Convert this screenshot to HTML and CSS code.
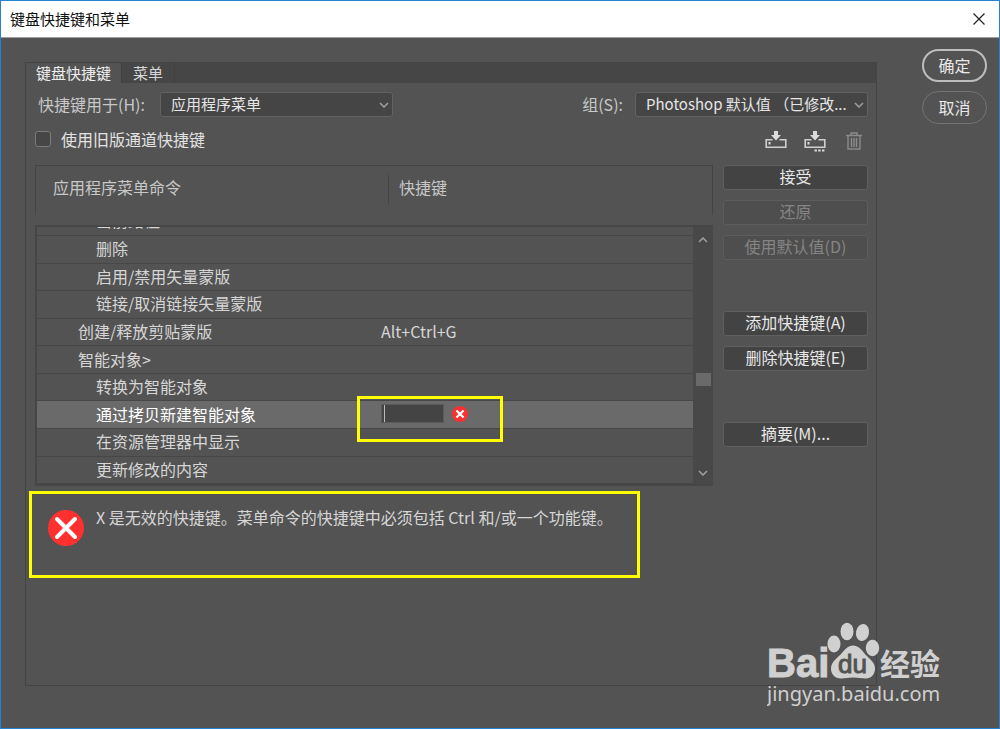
FILE: index.html
```html
<!DOCTYPE html>
<html lang="zh-CN">
<head>
<meta charset="utf-8">
<title>键盘快捷键和菜单</title>
<link rel="stylesheet" href="styles.css">
</head>
<body>
<div class="window">
  <header class="titlebar">
    <h1 class="title">键盘快捷键和菜单</h1>
    <button class="close" aria-label="关闭"><svg width="12" height="12" viewBox="0 0 12 12"><path d="M0.5 0.5l11 11M11.5 0.5l-11 11" stroke="#222" stroke-width="1.2"/></svg></button>
  </header>
  <main class="content">
    <section class="panel">
      <nav class="tabs" role="tablist">
        <button class="tab tab-active" role="tab" aria-selected="true">键盘快捷键</button>
        <button class="tab" role="tab" aria-selected="false">菜单</button>
      </nav>
      <div class="filters">
        <label class="label label-scope" for="scope">快捷键用于(H):</label>
        <div class="select-wrap">
          <select class="select" id="scope"><option>应用程序菜单</option></select>
          <svg class="chevron" width="10" height="6" viewBox="0 0 10 6"><path d="M1 1l4 4 4-4"/></svg>
        </div>
        <label class="label label-set" for="set">组(S):</label>
        <div class="select-wrap">
          <select class="select" id="set"><option>Photoshop 默认值 （已修改...</option></select>
          <svg class="chevron" width="10" height="6" viewBox="0 0 10 6"><path d="M1 1l4 4 4-4"/></svg>
        </div>
      </div>
      <div class="options">
        <label class="check"><input class="checkbox" type="checkbox">使用旧版通道快捷键</label>
        <div class="tools">
          <button class="tool" aria-label="存储"><svg width="22" height="22" viewBox="0 0 22 22"><path d="M9 1h4v4h3l-5 5.500-5-5.500h3z" fill="#dcdcdc"/><path d="M7.500 9.800H1.200v7.400h19.600V9.800H14.500" fill="none" stroke="#cfcfcf" stroke-width="1.600"/><path d="M3.500 12h2v2.500h-2z" fill="#dcdcdc"/></svg></button>
          <button class="tool" aria-label="存储为"><svg width="22" height="22" viewBox="0 0 22 22"><path d="M9 1h4v4h3l-5 5.500-5-5.500h3z" fill="#dcdcdc"/><path d="M7.500 9.800H1.200v7.400h19.600V9.800H14.500" fill="none" stroke="#cfcfcf" stroke-width="1.600"/><path d="M3.500 12h2v2.500h-2zM10.500 19.500h2.400v2h-2.400zM14.200 19.500h2.400v2h-2.400zM18 19.500h2.400v2H18z" fill="#dcdcdc"/></svg></button>
          <button class="tool" aria-label="删除组"><svg width="22" height="22" viewBox="0 0 22 22"><path d="M3 5.500h16M8 5V3h6v2M5 6v13h12V6M8.500 8v9M11 8v9M13.500 8v9" fill="none" stroke="#8b8b8b" stroke-width="1.400"/></svg></button>
        </div>
      </div>
      <div class="work">
        <div class="left">
          <div class="list">
            <table class="commands">
              <thead class="head"><tr class="head-row"><th class="head-cell">应用程序菜单命令</th><th class="head-cell head-key">快捷键</th></tr></thead>
              <tbody class="rows">
                <tr class="row row-cut"><td class="cell deep">当前路径</td><td class="cell key"></td></tr>
                <tr class="row"><td class="cell deep">删除</td><td class="cell key"></td></tr>
                <tr class="row"><td class="cell deep">启用/禁用矢量蒙版</td><td class="cell key"></td></tr>
                <tr class="row"><td class="cell deep">链接/取消链接矢量蒙版</td><td class="cell key"></td></tr>
                <tr class="row"><td class="cell">创建/释放剪贴蒙版</td><td class="cell key">Alt+Ctrl+G</td></tr>
                <tr class="row"><td class="cell">智能对象&gt;</td><td class="cell key"></td></tr>
                <tr class="row"><td class="cell deep">转换为智能对象</td><td class="cell key"></td></tr>
                <tr class="row row-selected"><td class="cell deep">通过拷贝新建智能对象</td><td class="cell key edit">
                  <span class="entry"><input class="entry-input" type="text" aria-label="快捷键"></span>
                  <svg width="16" height="16" viewBox="0 0 36 36"><circle cx="18" cy="18" r="18" fill="#f83232"/><path d="M10 10l16 16M26 10L10 26" stroke="#fff" stroke-width="5"/></svg>
                  <span class="marker"></span></td></tr>
                <tr class="row"><td class="cell deep">在资源管理器中显示</td><td class="cell key"></td></tr>
                <tr class="row"><td class="cell deep">更新修改的内容</td><td class="cell key"></td></tr>
              </tbody>
            </table>
            <div class="scrollbar">
              <svg class="arrow" width="10" height="6" viewBox="0 0 10 6"><path d="M1 5l4-4 4 4"/></svg>
              <div class="thumb"></div>
              <svg class="arrow" width="10" height="6" viewBox="0 0 10 6"><path d="M1 1l4 4 4-4"/></svg>
            </div>
          </div>
          <div class="alert" role="alert">
            <svg class="alert-icon" width="36" height="36" viewBox="0 0 36 36"><circle cx="18" cy="18" r="18" fill="#ff3030"/><path d="M9 9l18 18M27 9L9 27" stroke="#fff" stroke-width="4" stroke-linecap="round"/></svg>
            <p class="alert-text">X 是无效的快捷键。菜单命令的快捷键中必须包括 Ctrl 和/或一个功能键。</p>
          </div>
        </div>
        <div class="actions">
          <div class="group">
            <button class="action">接受</button>
            <button class="action" disabled>还原</button>
            <button class="action" disabled>使用默认值(D)</button>
          </div>
          <div class="group">
            <button class="action">添加快捷键(A)</button>
            <button class="action">删除快捷键(E)</button>
          </div>
          <div class="group"><button class="action">摘要(M)...</button></div>
        </div>
      </div>
    </section>
    <div class="confirm">
      <button class="pill pill-primary">确定</button>
      <button class="pill">取消</button>
    </div>
  </main>
  <svg class="watermark" width="180" height="90" viewBox="0 0 180 90" role="img" aria-label="Baidu 经验">
    <g fill="#d0d0d0">
      <text class="wm-brand" x="0" y="55">Bai</text>
      <ellipse cx="67" cy="22" rx="6.500" ry="8.500"/><ellipse cx="80" cy="9.500" rx="6.500" ry="8.800"/><ellipse cx="95.500" cy="10.500" rx="6.500" ry="8.600" transform="rotate(10 95.500 10.500)"/><ellipse cx="105.500" cy="26" rx="6.700" ry="8.200"/>
      <path d="M86 23.500c5 0 8.500 4 11.500 8s10.500 8 10.500 15c0 6-4 10-9 10-4.500 0-8-1-13-1s-8 1-12 1c-6 0-10-4-10-10 0-7 7-11 10.500-15s6.500-8 11.500-8z"/>
      <text class="wm-cjk" x="113" y="53">经验</text>
      <text class="wm-url" x="0" y="79">jingyan.baidu.com</text>
    </g>
    <text class="wm-du" x="71" y="51">du</text>
  </svg>
</div>
</body>
</html>
```
FILE: styles.css
```css
* { box-sizing: border-box; }
body {
  margin: 0;
  background: #535353;
  color: #d6d6d6;
  font: 16px/20px "Noto Sans CJK SC", sans-serif;
}
button, input, select { font: inherit; color: inherit; margin: 0; }
button { padding: 0; background: none; border: 0; }
.window {
  position: relative;
  display: flex;
  flex-direction: column;
  min-height: 100vh;
  border: 1px solid #2482d2;
}
.titlebar {
  display: flex;
  align-items: center;
  justify-content: space-between;
  height: 37px;
  padding: 0 14px 1px 9px;
  background: #fff;
  border-bottom: 1px solid #a0a0a0;
}
.title { margin: 0; font-size: 15px; font-weight: 400; color: #111; }
.close { display: flex; }
.content {
  flex: 1;
  display: flex;
  gap: 45px;
  padding: 11px 12px 42px 24px;
}
.panel {
  flex: 1;
  min-width: 0;
  display: flex;
  flex-direction: column;
  margin-top: 13px;
  border: 1px solid #444;
}
.tabs { display: flex; height: 20px; background: #464646; }
.tab {
  padding: 0 11px;
  border-right: 1px solid #404040;
  line-height: 20px;
  font-size: 15px;
}
.tab-active { background: #535353; color: #eee; padding: 0 10px; }
.filters { display: flex; align-items: center; padding: 9px 8px 0 12px; }
.label { padding-bottom: 2px; color: #c8c8c8; }
.label-scope { width: 110px; }
.label-set { margin-left: auto; }
.select-wrap { position: relative; width: 233px; margin-left: 12px; }
.select {
  display: block;
  width: 100%;
  height: 25px;
  padding: 0 16px 2px 10px;
  appearance: none;
  background: #454545;
  color: #e6e6e6;
  border: 1px solid #626262;
  border-radius: 3px;
  font-size: 15px;
}
.chevron { position: absolute; right: 4px; top: 10px; }
.chevron path, .arrow path { fill: none; stroke: #a0a0a0; stroke-width: 1.5; }
.options {
  display: flex;
  align-items: center;
  justify-content: space-between;
  height: 46px;
  margin-bottom: 2px;
  padding: 0 11px 0 9px;
}
.check { display: flex; align-items: center; gap: 10px; padding-bottom: 2px; color: #e2e2e2; }
.checkbox {
  width: 16px;
  height: 16px;
  appearance: none;
  background: #464646;
  border: 1px solid #7c7c7c;
  border-radius: 3px;
}
.tools { display: flex; gap: 17px; padding-top: 2px; }
.tool { display: flex; }
.work { flex: 1; display: flex; gap: 10px; padding: 0 8px 0 9px; }
.left { flex: 1; min-width: 0; }
.list { display: grid; grid-template-columns: minmax(0, 1fr); }
.commands, .scrollbar { grid-area: 1 / 1; }
.commands { display: block; }
.head {
  display: block;
  height: 50px;
  margin-bottom: 10px;
  border: 1px solid #444;
  border-bottom: 0;
}
.head-row { display: flex; padding-top: 9px; }
.head-cell {
  flex: 0 0 352px;
  padding: 2px 0 7px 17px;
  text-align: left;
  font-weight: 400;
  color: #c8c8c8;
}
.head-key { flex: 1; padding-left: 10px; border-left: 1px solid #444; }
.rows {
  display: flex;
  flex-direction: column;
  height: 261px;
  border: 2px solid #464646;
}
.row {
  flex: 1;
  display: flex;
  align-items: center;
  border-bottom: 1px solid #474747;
}
.row-cut { flex: 0 0 9px; overflow: hidden; align-items: flex-end; }
.cell { flex: 0 0 344px; padding: 0 0 2px 41px; }
.row-cut .cell { padding-bottom: 5px; }
.deep { padding-left: 59px; }
.key { flex: 1; padding-left: 0; }
.row-selected { background: #6a6a6a; color: #fff; }
.edit { position: relative; display: flex; align-items: center; gap: 8px; }
.entry {
  display: flex;
  width: 63px;
  height: 19px;
  padding: 0 2px;
  background: #444;
  border: 1px solid #5a5a5a;
}
.entry-input {
  width: 100%;
  padding: 0;
  background: transparent;
  border: 0;
  border-left: 1px solid #bbb;
}
.marker {
  position: absolute;
  left: -24px;
  top: -8px;
  width: 146px;
  height: 46px;
  border: 3px solid #ff0;
}
.scrollbar {
  justify-self: end;
  display: flex;
  flex-direction: column;
  align-items: center;
  width: 20px;
  margin-top: 62px;
  margin-bottom: 2px;
  padding: 10px 0 8px;
  background: #484848;
}
.thumb {
  width: 15px;
  height: 13px;
  margin: 130px 0 auto;
  background: #6a6a6a;
}
.alert {
  display: flex;
  align-items: flex-start;
  gap: 12px;
  min-height: 87px;
  margin: 5px 73px 0 -6px;
  padding: 13px 16px;
  border: 3px solid #ff0;
}
.alert-icon { flex: none; margin-top: 3px; }
.alert-text { margin: 0; }
.actions { width: 145px; display: flex; flex-direction: column; gap: 51px; }
.group { display: flex; flex-direction: column; gap: 10px; }
.action {
  height: 25px;
  padding-bottom: 3px;
  line-height: 20px;
  background: #434343;
  color: #e8e8e8;
  border: 1px solid #606060;
  border-radius: 3px;
}
.action:disabled { background: #4e4e4e; color: #858585; border-color: #5d5d5d; }
.confirm { display: flex; flex-direction: column; gap: 9px; }
.pill {
  width: 65px;
  height: 33px;
  padding-bottom: 2px;
  color: #e8e8e8;
  border: 1px solid #757575;
  border-radius: 17px;
}
.pill-primary { border: 2px solid #bdbdbd; }
.watermark { position: absolute; right: 52px; bottom: 16px; }
.wm-brand { font: bold 40px "Liberation Sans", sans-serif; stroke: #d0d0d0; stroke-width: 1px; }
.wm-cjk { font: bold 30px "Noto Sans CJK SC", sans-serif; }
.wm-url { font: 20px "Noto Sans", sans-serif; }
.wm-du { font: 26px "Liberation Sans", sans-serif; fill: #535353; stroke: #535353; stroke-width: 1px; }
```
